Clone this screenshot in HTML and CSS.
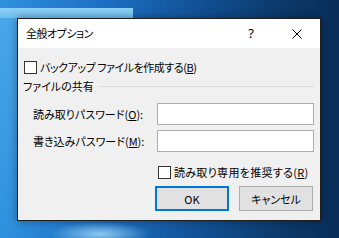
FILE: index.html
```html
<!DOCTYPE html>
<html lang="ja">
<head>
<meta charset="utf-8">
<title>全般オプション</title>
<link rel="stylesheet" href="styles.css">
</head>
<body>
<div class="dialog">
  <div class="titlebar">
    <div class="title">全般オプション</div>
    <div class="tbtn help">?</div>
    <div class="tbtn close">
      <svg width="10" height="10" viewBox="0 0 10 10"><path d="M0.5 0.5L9.5 9.5M9.5 0.5L0.5 9.5" stroke="#000" stroke-width="1" fill="none"/></svg>
    </div>
  </div>
  <div class="content">
    <label class="check first"><span class="box"></span><span class="ctext tight">バックアップ ファイルを作成する(<u>B</u>)</span></label>
    <div class="group">
      <span class="glabel">ファイルの共有</span>
      <span class="gline"></span>
    </div>
    <div class="pw">
      <span class="plabel">読み取りパスワード(<u>O</u>):</span>
      <input class="field" type="password">
      <span class="plabel">書き込みパスワード(<u>M</u>):</span>
      <input class="field" type="password">
    </div>
    <div class="ro">
      <label class="check"><span class="box"></span><span class="ctext wide">読み取り専用を推奨する(<u>R</u>)</span></label>
    </div>
    <div class="buttons">
      <button class="btn default">OK</button>
      <button class="btn">キャンセル</button>
    </div>
  </div>
</div>
</body>
</html>
```
FILE: styles.css
```css
html, body {
  margin: 0;
  padding: 0;
}
body {
  width: 339px;
  height: 238px;
  overflow: hidden;
  font-family: "Noto Sans CJK JP", "Noto Sans", sans-serif;
  font-size: 11px;
  color: #000;
  background:
    linear-gradient(to bottom, #8ed0f5, #6cbdee) 0 8px / 133px 10px no-repeat,
    radial-gradient(ellipse 50px 12px at 100px 234px, rgba(160, 215, 248, 0.85), rgba(160, 215, 248, 0)),
    linear-gradient(to bottom, rgba(90, 180, 240, 0.6), rgba(90, 180, 240, 0)) 0 18px / 17px 220px no-repeat,
    linear-gradient(to right, #2f92de 0%, #2680d0 14%, #1b6bbd 35%, #114f92 60%, #0b3a6c 82%, #092d58 100%);
}
.dialog {
  margin: 18px 0 0 17px;
  width: 302px;
  border: 1px solid #1e1e1e;
  background: #f0f0f0;
  box-shadow: 0 0 8px rgba(0, 0, 0, 0.35);
}
.titlebar {
  height: 29px;
  background: #fff;
  display: flex;
  align-items: center;
}
.title {
  flex: 1;
  padding-left: 8px;
  font-size: 11px;
  letter-spacing: -0.5px;
  font-feature-settings: "palt";
  line-height: 29px;
}
.tbtn {
  width: 46px;
  height: 29px;
  display: flex;
  align-items: center;
  justify-content: center;
}
.help {
  font-family: "Noto Sans", sans-serif;
  font-size: 13px;
  line-height: 29px;
}
.content {
  padding: 12px 0 9px 0;
}
.check {
  display: flex;
  align-items: center;
  height: 15px;
  gap: 3px;
  font-feature-settings: "palt";
}
.check.first {
  padding-left: 6px;
}
.box {
  width: 13px;
  height: 13px;
  box-sizing: border-box;
  border: 1px solid #333;
  background: #fff;
  flex: none;
}
.ctext {
  line-height: 15px;
  white-space: nowrap;
}
.ctext.tight {
  letter-spacing: -0.45px;
}
.ctext.wide {
  letter-spacing: 0.3px;
}
.group {
  display: flex;
  align-items: center;
  height: 15px;
  margin-top: 4px;
  padding: 0 6px 0 5px;
  font-feature-settings: "palt";
}
.glabel {
  line-height: 15px;
}
.gline {
  flex: 1;
  height: 1px;
  background: #dcdcdc;
  margin-left: 5px;
}
.pw {
  display: grid;
  grid-template-columns: 1fr 157px;
  grid-auto-rows: 22px;
  row-gap: 5px;
  margin-top: 9px;
  padding: 0 6px 0 15px;
  align-items: center;
}
.plabel {
  font-feature-settings: "palt";
  white-space: nowrap;
}
.field {
  -webkit-appearance: none;
  appearance: none;
  margin: 0;
  width: 157px;
  height: 22px;
  box-sizing: border-box;
  border: 1px solid #adadad;
  background: #fff;
  outline: none;
}
.ro {
  margin-top: 13px;
  padding-left: 140px;
}
.buttons {
  display: flex;
  justify-content: flex-end;
  gap: 10px;
  margin-top: 6px;
  padding-right: 7px;
}
.btn {
  width: 74px;
  height: 25px;
  box-sizing: border-box;
  border: 1px solid #adadad;
  background: #e1e1e1;
  font-family: "Noto Sans CJK JP", "Noto Sans", sans-serif;
  font-size: 11px;
  font-feature-settings: "palt";
  color: #000;
  padding: 0;
  margin: 0;
}
.btn.default {
  border: 2px solid #0078d7;
}
```
